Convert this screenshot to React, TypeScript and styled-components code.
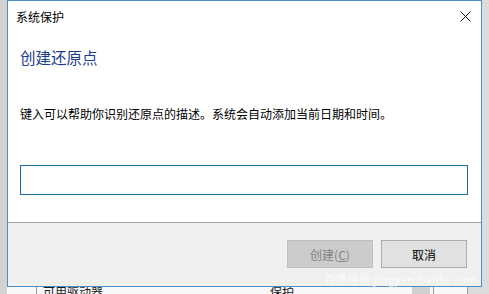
import React from "react";
import styled, { createGlobalStyle } from "styled-components";

const Global = createGlobalStyle`
  html, body { margin: 0; padding: 0; background: #d8d8d8; }
  body { font-family: "Noto Sans CJK SC", "Noto Sans", sans-serif; }
`;

const Page = styled.div`
  width: 489px;
  height: 294px;
  overflow: hidden;
  display: grid;
  grid-template-rows: 287px 7px;
  background: #d8d8d8;
`;

const TopRow = styled.div`
  display: grid;
  grid-template-columns: 7px 475px 7px;
`;

const Gutter = styled.div<{ $tone: string }>`
  background: ${(p) => p.$tone};
`;

const Dialog = styled.div`
  position: relative;
  box-sizing: border-box;
  height: 287px;
  border: 1px solid #4b8fc9;
  background: #ffffff;
  display: flex;
  flex-direction: column;
`;

const TitleBar = styled.div`
  height: 30px;
  display: flex;
  align-items: center;
  justify-content: space-between;
  padding: 0 0 0 8px;
  font-size: 12px;
  color: #000;
`;

const CloseBox = styled.div`
  width: 28px;
  height: 30px;
  margin-right: 1px;
  display: flex;
  align-items: center;
  justify-content: center;
  padding-right: 1px;
`;

const Content = styled.div`
  flex: 1;
  padding: 16px 13px 0 12px;
  display: flex;
  flex-direction: column;
`;

const Heading = styled.div`
  font-size: 15.5px;
  line-height: 20px;
  color: #1d3c8c;
`;

const Description = styled.div`
  margin-top: 39px;
  font-size: 12px;
  line-height: 16px;
  color: #000;
`;

const Input = styled.input`
  margin-top: 43px;
  box-sizing: border-box;
  width: 448px;
  height: 30px;
  border: 1px solid #1f6e9c;
  outline: none;
  background: #fff;
  padding: 0 4px;
  font-family: inherit;
  font-size: 12px;
`;

const Footer = styled.div`
  box-sizing: border-box;
  height: 64px;
  border-top: 1px solid #a3a3a3;
  background: #f0f0f0;
  display: flex;
  justify-content: flex-end;
  align-items: flex-start;
  gap: 8px;
  padding: 17px 14px 0 0;
`;

const Button = styled.button<{ $disabled?: boolean }>`
  box-sizing: border-box;
  width: 86px;
  height: 28px;
  margin: 0;
  padding: 0;
  font-family: inherit;
  font-size: 12px;
  border: 1px solid ${(p) => (p.$disabled ? "#bfbfbf" : "#adadad")};
  background: ${(p) => (p.$disabled ? "#cccccc" : "#e1e1e1")};
  color: ${(p) => (p.$disabled ? "#838383" : "#000000")};
`;

const Watermark = styled.div`
  position: absolute;
  right: 4px;
  bottom: 1px;
  font-size: 11px;
  line-height: 12px;
  color: rgba(255, 255, 255, 0.75);
  letter-spacing: 0.5px;
`;

const BottomRow = styled.div`
  display: grid;
  grid-template-columns: 7px 29px 1px 375px 18px 3px 1px 33px 1px 1fr;
  overflow: hidden;
  background: #f7f7f7;
`;

const Line = styled.div`
  background: #9a9a9a;
`;

const Block = styled.div<{ $tone: string }>`
  background: ${(p) => p.$tone};
`;

const ListCells = styled.div`
  display: flex;
  font-size: 12px;
  line-height: 10px;
  color: #1a1a1a;
  padding-left: 6px;
  white-space: nowrap;
  overflow: hidden;
`;

const Cell = styled.span<{ $w: number }>`
  width: ${(p) => p.$w}px;
  flex: none;
`;

export default function App() {
  return (
    <>
      <Global />
      <Page>
        <TopRow>
          <Gutter $tone="#d3d3d3" />
          <Dialog>
            <TitleBar>
              <span>系统保护</span>
              <CloseBox>
                <svg width="11" height="11" viewBox="0 0 11 11">
                  <path d="M0.5 0.5 L10.5 10.5 M10.5 0.5 L0.5 10.5" stroke="#111" strokeWidth="1" />
                </svg>
              </CloseBox>
            </TitleBar>
            <Content>
              <Heading>创建还原点</Heading>
              <Description>键入可以帮助你识别还原点的描述。系统会自动添加当前日期和时间。</Description>
              <Input />
            </Content>
            <Footer>
              <Button $disabled>
                创建(<u>C</u>)
              </Button>
              <Button>取消</Button>
            </Footer>
            <Watermark>百度经验 jingyan.baidu.com</Watermark>
          </Dialog>
          <Gutter $tone="#dcdcdc" />
        </TopRow>
        <BottomRow>
          <Block $tone="#d3d3d3" />
          <Block $tone="#f7f7f7" />
          <Line />
          <ListCells>
            <Cell $w={227}>可用驱动器</Cell>
            <Cell $w={100}>保护</Cell>
          </ListCells>
          <Block $tone="#d0d0d0" />
          <Block $tone="#f7f7f7" />
          <Line />
          <Block $tone="#f7f7f7" />
          <Line />
          <Block $tone="#dcdcdc" />
        </BottomRow>
      </Page>
    </>
  );
}
